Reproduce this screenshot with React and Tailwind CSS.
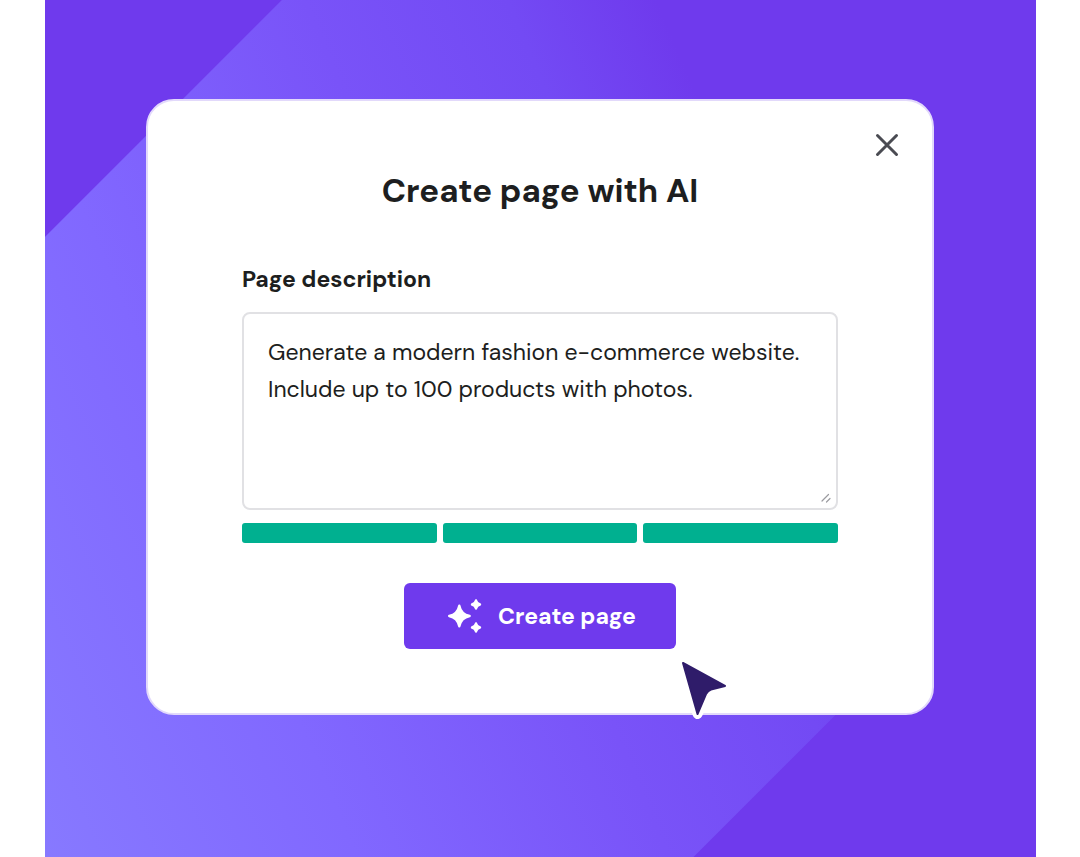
import React from 'react';

const SparklesIcon = () => (
  <svg aria-hidden="true" viewBox="0 0 34 36" className="h-9 w-[34px] shrink-0" fill="#ffffff" stroke="#ffffff" strokeLinejoin="round">
    <path strokeWidth="2.4" d="M11.3 7.7 Q13 16.300 21.6 18 Q13 19.700 11.3 28.3 Q9.600 19.700 1.200 18 Q9.600 16.300 11.3 7.7 Z" />
    <path strokeWidth="2.4" d="M28 2.500 Q28.800 5.700 32 6.500 Q28.800 7.300 28 10.500 Q27.200 7.300 24 6.500 Q27.200 5.700 28 2.500 Z" />
    <path strokeWidth="2.4" d="M28 25.500 Q28.800 28.700 32 29.500 Q28.800 30.300 28 33.500 Q27.200 30.300 24 29.500 Q27.200 28.700 28 25.500 Z" />
  </svg>
);

const CloseIcon = () => (
  <svg aria-hidden="true" viewBox="0 0 24 24" className="h-6 w-6" fill="none" stroke="#4a4b52" strokeWidth="3" strokeLinecap="round">
    <path d="M2.500 2.500 21.500 21.500M21.500 2.500 2.500 21.500" />
  </svg>
);

const ResizeHandle = () => (
  <svg aria-hidden="true" viewBox="0 0 10 10" className="pointer-events-none absolute right-[7px] bottom-[7px] h-2.5 w-2.5" fill="none" stroke="#9b9ba0" strokeWidth="1.2" strokeLinecap="round">
    <path d="M1 8 7.500 1.500M5.500 9 9 5.500" />
  </svg>
);

const Cursor = () => (
  <svg aria-hidden="true" viewBox="0 0 60 68" className="pointer-events-none absolute right-[198px] -bottom-[9px] h-[68px] w-[60px]" strokeLinejoin="round">
    <path d="M9 9 L51 32 L34 38.500 L23.500 60 Z" fill="#ffffff" stroke="#ffffff" strokeWidth="10" />
    <path d="M9 9 L51 32 L37 35.500 Q34 36.500 32 40 L23.500 60 Z" fill="#2f1c6a" stroke="#2f1c6a" strokeWidth="2" />
  </svg>
);

const steps = ['Length', 'Detail', 'Clarity'];

const CreatePageDialog = () => (
  <form
    role="dialog"
    aria-labelledby="dialog-title"
    onSubmit={(e) => e.preventDefault()}
    className="relative w-full max-w-[788px] rounded-[28px] border-2 border-[#e2d9fb] bg-white px-[94px] pt-[68px] pb-16 text-[#1d1e20]"
  >
    <button type="button" aria-label="Close" className="absolute top-8 right-[33px]">
      <CloseIcon />
    </button>

    <h1 id="dialog-title" className="text-center text-[33px] leading-[44px] font-bold">Create page with AI</h1>

    <label htmlFor="description" className="mt-[50px] block text-[23px] leading-8 font-bold">Page description</label>
    <div className="relative mt-[17px]">
      <textarea
        id="description"
        defaultValue={'Generate a modern fashion e-commerce website.\nInclude up to 100 products with photos.'}
        className="block h-[198px] w-full resize-none overflow-hidden rounded-lg border-2 border-[#e1e1e4] px-6 py-5 text-[23px] leading-[37px] outline-none"
      />
      <ResizeHandle />
    </div>

    <div className="mt-[13px] grid grid-cols-3 gap-1.5">
      {steps.map((step) => (
        <div key={step} className="h-5 rounded-[3px] bg-[#00b090]" />
      ))}
    </div>

    <button type="submit" className="mx-auto mt-10 flex h-[66px] w-[272px] items-center justify-center gap-4 rounded-md bg-[#6f3aed] pl-1 text-[23px] font-bold text-white">
      <SparklesIcon />
      Create page
    </button>

    <Cursor />
  </form>
);

export default function App() {
  return (
    <div className="flex min-h-screen bg-white pr-[44px] pl-[45px] font-['DM_Sans','Lato',sans-serif]">
      <main className="flex flex-1 items-center justify-center bg-[linear-gradient(135deg,#6f3aed_167px,transparent_168px,transparent_1064px,#6f3aed_1065px),linear-gradient(67deg,#8779ff_0%,#8168ff_23%,#7953f8_46%,#734af4_61%,#6f3aed_72%)] pr-px pb-[43px]">
        <CreatePageDialog />
      </main>
    </div>
  );
}
